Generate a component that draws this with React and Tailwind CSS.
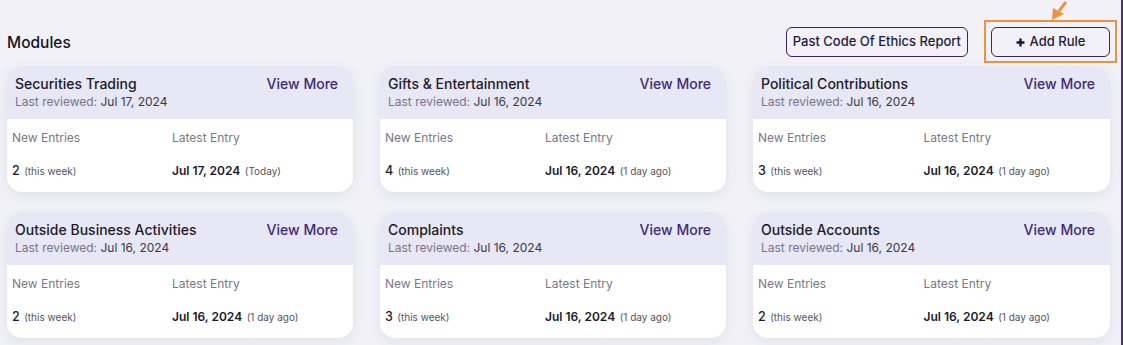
import React from 'react'

const modules = [
  { title: 'Securities Trading', reviewed: 'Jul 17, 2024', count: 2, latest: 'Jul 17, 2024', ago: '(Today)' },
  { title: 'Gifts & Entertainment', reviewed: 'Jul 16, 2024', count: 4, latest: 'Jul 16, 2024', ago: '(1 day ago)' },
  { title: 'Political Contributions', reviewed: 'Jul 16, 2024', count: 3, latest: 'Jul 16, 2024', ago: '(1 day ago)' },
  { title: 'Outside Business Activities', reviewed: 'Jul 16, 2024', count: 2, latest: 'Jul 16, 2024', ago: '(1 day ago)' },
  { title: 'Complaints', reviewed: 'Jul 16, 2024', count: 3, latest: 'Jul 16, 2024', ago: '(1 day ago)' },
  { title: 'Outside Accounts', reviewed: 'Jul 16, 2024', count: 2, latest: 'Jul 16, 2024', ago: '(1 day ago)' }
]

function ModuleCard({ item }) {
  return (
    <div className="rounded-[15px] overflow-hidden bg-white shadow-[0_4px_14px_rgba(40,30,90,0.07)]">
      {/* header */}
      <div className="bg-[#e8e7f5] pl-2 pr-[15px] pt-2 pb-[9px] flex justify-between">
        <div>
          <div className="text-[14px] leading-5 font-medium text-[#1c1a2c]">{item.title}</div>
          <div className="text-[12px] leading-4 text-[#77758a]">
            Last reviewed: <span className="text-[#3a384a]">{item.reviewed}</span>
          </div>
        </div>
        <div className="text-[14px] leading-5 font-medium text-[#3e2a78]">View More</div>
      </div>

      {/* body */}
      <div className="grid grid-cols-2 pl-[5px] pr-[21px] pt-[11px] pb-3">
        <div className="text-[12px] leading-4 text-[#7a7888]">New Entries</div>
        <div className="text-[12px] leading-4 text-[#7a7888]">Latest Entry</div>
        <div className="mt-[14px] leading-[18px] text-[#1c1a2c]">
          <span className="text-[12.5px] font-medium">{item.count}</span>{' '}
          <span className="text-[10px] text-[#55535f]">(this week)</span>
        </div>
        <div className="mt-[14px] leading-[18px] text-[#1c1a2c]">
          <span className="text-[12px] font-semibold">{item.latest}</span>{' '}
          <span className="text-[10px] text-[#55535f]">{item.ago}</span>
        </div>
      </div>
    </div>
  )
}

export default function App() {
  return (
    <div className="w-[1123px] h-[345px] bg-[#f1f1f7] border-r-2 border-[#45365f] pl-[7px] pr-[11px] font-['Inter',sans-serif] overflow-hidden">
      {/* top bar */}
      <div className="flex items-center justify-between pt-[27px] mb-[9px]">
        <h2 className="text-[15.5px] font-medium text-[#16141f] pt-[1px]">Modules</h2>
        <div className="flex items-center gap-[23px]">
          <button className="h-[30px] px-[6px] rounded-md border border-[#35265c] text-[13px] font-medium text-[#241a40] bg-transparent">
            Past Code Of Ethics Report
          </button>
          <div className="relative">
            <button className="h-[30px] w-[119px] rounded-md border border-[#35265c] text-[13px] font-medium text-[#241a40] flex items-center justify-center gap-[5px]">
              <svg width="9" height="9" viewBox="0 0 9 9">
                <path d="M4.5 0.5v8M0.5 4.5h8" stroke="#1f1636" strokeWidth="2.4" />
              </svg>
              <span>Add Rule</span>
            </button>
            {/* highlight */}
            <div className="absolute -left-[7px] -right-[7px] -top-[7px] -bottom-[6px] border-2 border-[#ec9240] pointer-events-none" />
            <svg className="absolute left-[55px] -top-[27px]" width="26" height="24" viewBox="0 0 26 24">
              <line x1="13" y1="11" x2="20" y2="2" stroke="#ec9240" strokeWidth="3" />
              <polygon points="6,20 7,8 18,14" fill="#ec9240" />
            </svg>
          </div>
        </div>
      </div>

      {/* cards */}
      <div className="grid grid-cols-[346px_346px_357px] gap-x-[27px] gap-y-[20px]">
        {modules.map((m, i) => (
          <ModuleCard key={i} item={m} />
        ))}
      </div>
    </div>
  )
}
